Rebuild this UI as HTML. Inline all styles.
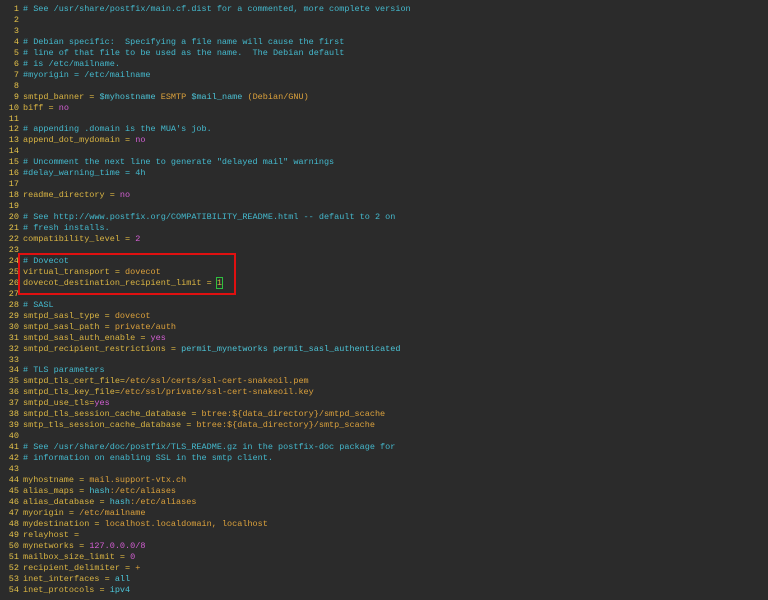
<!DOCTYPE html>
<html><head><meta charset="utf-8"><style>
html,body{margin:0;padding:0;background:#2b2b2b;width:768px;height:600px;overflow:hidden}
pre{margin:0;padding:4px 0 0 0;font-family:"Liberation Mono",monospace;font-size:8.5px;line-height:10.95px;color:#d9b443;white-space:pre}
.n{color:#e5c24a;display:inline-block;width:19px;text-align:right;margin-right:4px}
.c{color:#44b8cc}.o{color:#dba13c}.m{color:#d35fd3}.b{color:#4cc3d6}
.box{position:absolute;left:18px;top:253px;width:214px;height:38px;border:2px solid #e01010}
.cur{outline:1px solid #2fbf3f;color:#d9b443}
</style></head><body>
<pre><span class="n">1</span><span class="c"># See /usr/share/postfix/main.cf.dist for a commented, more complete version</span>
<span class="n">2</span>
<span class="n">3</span>
<span class="n">4</span><span class="c"># Debian specific:  Specifying a file name will cause the first</span>
<span class="n">5</span><span class="c"># line of that file to be used as the name.  The Debian default</span>
<span class="n">6</span><span class="c"># is /etc/mailname.</span>
<span class="n">7</span><span class="c">#myorigin = /etc/mailname</span>
<span class="n">8</span>
<span class="n">9</span>smtpd_banner = <span class="b">$myhostname</span> <span class="o">ESMTP</span> <span class="b">$mail_name</span> <span class="o">(Debian/GNU)</span>
<span class="n">10</span>biff = <span class="m">no</span>
<span class="n">11</span>
<span class="n">12</span><span class="c"># appending .domain is the MUA's job.</span>
<span class="n">13</span>append_dot_mydomain = <span class="m">no</span>
<span class="n">14</span>
<span class="n">15</span><span class="c"># Uncomment the next line to generate "delayed mail" warnings</span>
<span class="n">16</span><span class="c">#delay_warning_time = 4h</span>
<span class="n">17</span>
<span class="n">18</span>readme_directory = <span class="m">no</span>
<span class="n">19</span>
<span class="n">20</span><span class="c"># See http://www.postfix.org/COMPATIBILITY_README.html -- default to 2 on</span>
<span class="n">21</span><span class="c"># fresh installs.</span>
<span class="n">22</span>compatibility_level = <span class="m">2</span>
<span class="n">23</span>
<span class="n">24</span><span class="c"># Dovecot</span>
<span class="n">25</span>virtual_transport = <span class="o">dovecot</span>
<span class="n">26</span>dovecot_destination_recipient_limit = <span class="cur">1</span>
<span class="n">27</span>
<span class="n">28</span><span class="c"># SASL</span>
<span class="n">29</span>smtpd_sasl_type = <span class="o">dovecot</span>
<span class="n">30</span>smtpd_sasl_path = <span class="o">private/auth</span>
<span class="n">31</span>smtpd_sasl_auth_enable = <span class="m">yes</span>
<span class="n">32</span>smtpd_recipient_restrictions = <span class="b">permit_mynetworks permit_sasl_authenticated</span>
<span class="n">33</span>
<span class="n">34</span><span class="c"># TLS parameters</span>
<span class="n">35</span>smtpd_tls_cert_file=<span class="o">/etc/ssl/certs/ssl-cert-snakeoil.pem</span>
<span class="n">36</span>smtpd_tls_key_file=<span class="o">/etc/ssl/private/ssl-cert-snakeoil.key</span>
<span class="n">37</span>smtpd_use_tls=<span class="m">yes</span>
<span class="n">38</span>smtpd_tls_session_cache_database = <span class="o">btree:${data_directory}/smtpd_scache</span>
<span class="n">39</span>smtp_tls_session_cache_database = <span class="o">btree:${data_directory}/smtp_scache</span>
<span class="n">40</span>
<span class="n">41</span><span class="c"># See /usr/share/doc/postfix/TLS_README.gz in the postfix-doc package for</span>
<span class="n">42</span><span class="c"># information on enabling SSL in the smtp client.</span>
<span class="n">43</span>
<span class="n">44</span>myhostname = <span class="o">mail.support-vtx.ch</span>
<span class="n">45</span>alias_maps = <span class="b">hash</span><span class="o">:/etc/aliases</span>
<span class="n">46</span>alias_database = <span class="b">hash</span><span class="o">:/etc/aliases</span>
<span class="n">47</span>myorigin = <span class="o">/etc/mailname</span>
<span class="n">48</span>mydestination = <span class="o">localhost.localdomain, localhost</span>
<span class="n">49</span>relayhost =
<span class="n">50</span>mynetworks = <span class="m">127.0.0.0/8</span>
<span class="n">51</span>mailbox_size_limit = <span class="m">0</span>
<span class="n">52</span>recipient_delimiter = <span class="o">+</span>
<span class="n">53</span>inet_interfaces = <span class="b">all</span>
<span class="n">54</span>inet_protocols = <span class="b">ipv4</span></pre>
<div class="box"></div>
</body></html>
